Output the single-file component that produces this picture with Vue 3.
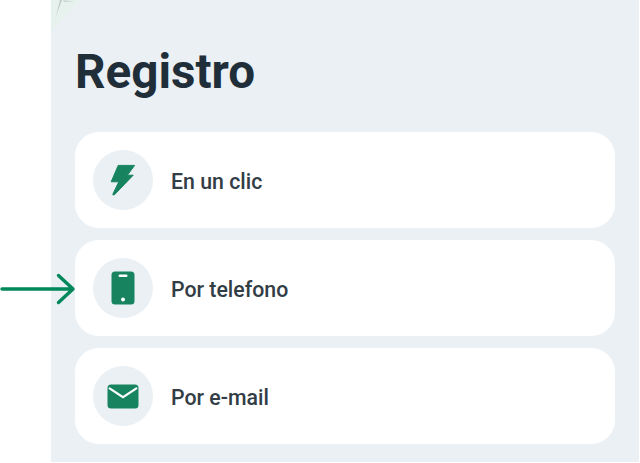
<script setup>
const items = [
  { label: 'En un clic', icon: 'bolt' },
  { label: 'Por telefono', icon: 'phone' },
  { label: 'Por e-mail', icon: 'mail' },
]
</script>

<template>
  <div class="page">
    <main class="panel">
      <svg class="deco" width="30" height="34" viewBox="0 0 30 34" aria-hidden="true">
        <path d="M0 0H30L0 32Z" fill="#e7f1ee" />
        <path d="M9 0H11L6 13.5L4.4 18.5Z" fill="#bccdc8" />
        <path d="M12 0L24 1.6L13 2Z" fill="#c8d8d3" />
      </svg>
      <h1 class="title">Registro</h1>
      <ul class="list">
        <li v-for="item in items" :key="item.label" class="card">
          <span class="badge">
            <svg v-if="item.icon === 'bolt'" width="26" height="32" viewBox="0 0 26 32">
              <path d="M8.2 1.4H24.6L17.4 11.2H23.2L4.4 30.8C3.4 31.4 2.6 31 3 29.8L8.8 17.8H1.2Z" fill="#17845f" stroke="#17845f" stroke-linejoin="round" />
            </svg>
            <svg v-else-if="item.icon === 'phone'" width="24" height="34" viewBox="0 0 24 34">
              <rect x="0.5" y="0.5" width="23" height="33" rx="3.5" fill="#17845f" />
              <rect x="7.5" y="3.5" width="9" height="2.6" rx="1.3" fill="#fff" />
              <circle cx="12" cy="28.5" r="2" fill="#fff" />
            </svg>
            <svg v-else width="32" height="25" viewBox="0 0 32 25">
              <rect x="0.5" y="0.5" width="31" height="24" rx="3.5" fill="#17845f" />
              <path d="M2.6 4.4L16 13.2L29.4 4.4" fill="none" stroke="#fff" stroke-width="2.2" stroke-linecap="round" />
            </svg>
          </span>
          <span class="label">{{ item.label }}</span>
        </li>
      </ul>
    </main>
    <svg class="arrow" width="76" height="32" viewBox="0 0 76 32" aria-hidden="true">
      <path d="M2 16H73M58.5 2.5L73 16L58.5 29.5" fill="none" stroke="#00875a" stroke-width="3.4" stroke-linecap="round" stroke-linejoin="round" />
    </svg>
  </div>
</template>

<style>
html, body { margin: 0; background: #fff; }
</style>

<style scoped>
.page {
  position: relative;
  width: 640px;
  height: 463px;
  overflow: hidden;
  background: #fff;
  font-family: Roboto, "Liberation Sans", sans-serif;
}
.panel {
  position: relative;
  box-sizing: border-box;
  width: 588px;
  height: 462px;
  margin-left: 51px;
  padding: 44px 24px 0;
  background: #eaf0f4;
}
.deco { position: absolute; left: 0; top: 0; }
.title {
  margin: 0 0 32px;
  font-size: 47.6px;
  line-height: 56px;
  font-weight: 700;
  color: #1f2e38;
}
.list {
  display: flex;
  flex-direction: column;
  gap: 12px;
  margin: 0;
  padding: 0;
  list-style: none;
}
.card {
  display: flex;
  align-items: center;
  gap: 18px;
  height: 96px;
  padding: 0 18px;
  box-sizing: border-box;
  border-radius: 24px;
  background: #fff;
}
.badge {
  display: flex;
  align-items: center;
  justify-content: center;
  width: 60px;
  height: 60px;
  border-radius: 50%;
  background: #eaf0f4;
}
.label {
  padding-top: 2px;
  font-size: 21.3px;
  font-weight: 500;
  color: #323d45;
}
.arrow { position: absolute; left: 0; top: 273px; }
</style>
